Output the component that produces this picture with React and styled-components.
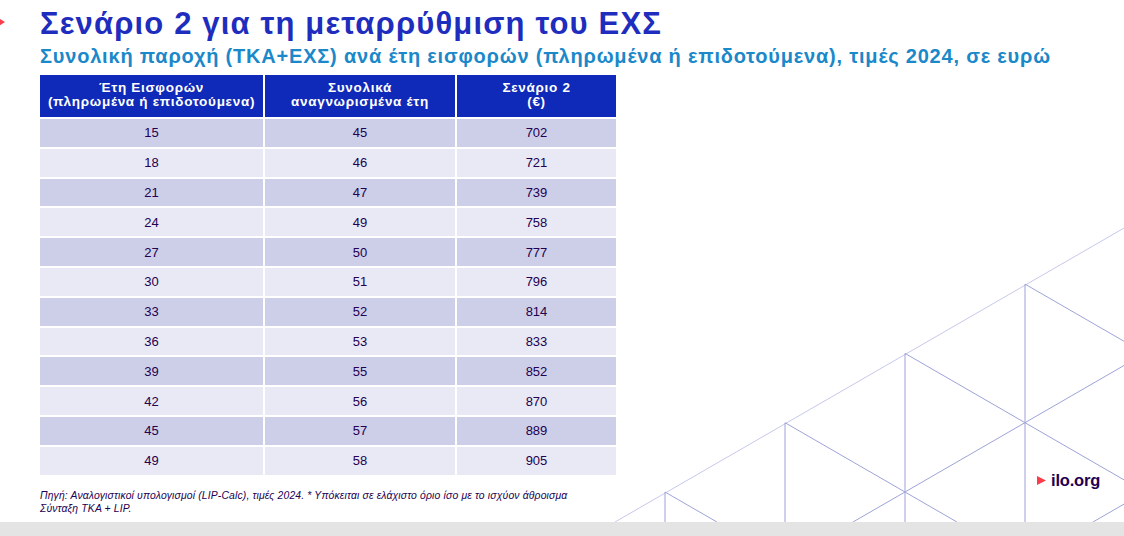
import styled, { createGlobalStyle } from 'styled-components';

const GlobalStyle = createGlobalStyle`
  html, body {
    margin: 0;
    padding: 0;
    background: #ffffff;
  }
  body {
    font-family: "Liberation Sans", Arial, sans-serif;
  }
`;

const Page = styled.div`
  width: 1124px;
  height: 536px;
  display: flex;
  flex-direction: column;
  overflow: hidden;
  background: #e4e4e4;
`;

const Slide = styled.div`
  position: relative;
  height: 522px;
  background: #ffffff;
  overflow: hidden;
  padding: 0 0 0 40px;
  box-sizing: border-box;
`;

const Pattern = styled.svg`
  position: absolute;
  left: 0;
  top: 0;
  width: 1124px;
  height: 522px;
  pointer-events: none;
`;

const Content = styled.div`
  position: relative;
  display: flex;
  flex-direction: column;
`;

const Title = styled.h1`
  margin: 7px 0 0;
  font-size: 31px;
  line-height: 34px;
  font-weight: 700;
  letter-spacing: 1.15px;
  color: #1e2dbe;
`;

const Subtitle = styled.h2`
  margin: 3px 0 0;
  font-size: 20px;
  line-height: 24px;
  font-weight: 700;
  letter-spacing: 0.8px;
  color: #1a88c9;
  white-space: nowrap;
`;

const Table = styled.div`
  margin-top: 7px;
  display: grid;
  grid-template-columns: 223px 190px 159px;
  grid-template-rows: 42px;
  grid-auto-rows: 27.8px;
  gap: 2px;
  width: 576px;
`;

const HeadCell = styled.div`
  background: #0f2ab8;
  color: #ffffff;
  font-size: 13.5px;
  font-weight: 700;
  line-height: 14px;
  letter-spacing: 0.7px;
  text-align: center;
  padding-top: 6px;
  box-sizing: border-box;
`;

const Cell = styled.div`
  background: ${p => (p.$odd ? '#cdcfe9' : '#e8e9f5')};
  color: #230050;
  font-size: 13px;
  display: flex;
  align-items: center;
  justify-content: center;
`;

const Note = styled.p`
  margin: 14px 0 0;
  font-size: 10.4px;
  line-height: 13px;
  letter-spacing: 0.15px;
  font-style: italic;
  color: #230050;
`;

const Logo = styled.div`
  position: absolute;
  left: 1037px;
  top: 471px;
  display: flex;
  align-items: center;
  gap: 5px;
  color: #230050;
  font-size: 16.5px;
  font-weight: 700;
  letter-spacing: -0.2px;
`;

const Mark = styled.svg`
  position: absolute;
  left: 0;
  top: 17px;
`;

const BottomBand = styled.div`
  flex: 1;
  background: #e4e4e4;
`;

const rows = [
  [15, 45, 702],
  [18, 46, 721],
  [21, 47, 739],
  [24, 49, 758],
  [27, 50, 777],
  [30, 51, 796],
  [33, 52, 814],
  [36, 53, 833],
  [39, 55, 852],
  [42, 56, 870],
  [45, 57, 889],
  [49, 58, 905],
];

// triangle lattice in the lower right corner
const dx = 120;
const dy = 69.3;
const slope = dy / dx;
const base = 522;
const verts = [0, 1, 2, 3, 4].map(k => [665 + dx * k, 492 - dy * k]);

const BgLines = () => {
  const lines = [];
  verts.forEach(([x, y], i) => {
    lines.push(<line key={'v' + i} x1={x} y1={y} x2={x} y2={base} />);
    const len = (base - y) / slope;
    lines.push(<line key={'d' + i} x1={x} y1={y} x2={x + len} y2={base} />);
  });
  // parallel up-right diagonals below the main one
  [853, 1093].forEach((x0, i) => {
    lines.push(<line key={'u' + i} x1={x0} y1={base} x2={1124} y2={base - (1124 - x0) * slope} />);
  });
  return (
    <Pattern viewBox="0 0 1124 522">
      <line x1={615} y1={base} x2={1124} y2={base - 509 * slope} stroke="#c6c9ea" strokeWidth="1" />
      <g stroke="#9ea3d8" strokeWidth="1">{lines}</g>
    </Pattern>
  );
};

const App = () => {
  return (
    <Page>
      <GlobalStyle />
      <Slide>
        <BgLines />
        <Mark width="6" height="10" viewBox="0 0 6 10">
          <polygon points="-3,0 5,5 -3,10" fill="#fa3c4b" />
        </Mark>
        <Content>
          <Title>Σενάριο 2 για τη μεταρρύθμιση του ΕΧΣ</Title>
          <Subtitle>
            Συνολική παροχή (ΤΚΑ+ΕΧΣ) ανά έτη εισφορών (πληρωμένα ή επιδοτούμενα), τιμές 2024, σε ευρώ
          </Subtitle>
          <Table>
            <HeadCell>
              Έτη Εισφορών
              <br />
              (πληρωμένα ή επιδοτούμενα)
            </HeadCell>
            <HeadCell>
              Συνολικά
              <br />
              αναγνωρισμένα έτη
            </HeadCell>
            <HeadCell>
              Σενάριο 2
              <br />
              (€)
            </HeadCell>
            {rows.map((r, i) =>
              r.map((v, j) => (
                <Cell key={i + '-' + j} $odd={i % 2 === 0}>
                  {v}
                </Cell>
              ))
            )}
          </Table>
          <Note>
            Πηγή: Αναλογιστικοί υπολογισμοί (LIP-Calc), τιμές 2024. * Υπόκειται σε ελάχιστο όριο ίσο με το ισχύον άθροισμα
            <br />
            Σύνταξη ΤΚΑ + LIP.
          </Note>
        </Content>
        <Logo>
          <svg width="9" height="9" viewBox="0 0 9 9">
            <polygon points="0,0 9,4.5 0,9" fill="#fa3c4b" />
          </svg>
          ilo.org
        </Logo>
      </Slide>
      <BottomBand />
    </Page>
  );
};

export default App;
